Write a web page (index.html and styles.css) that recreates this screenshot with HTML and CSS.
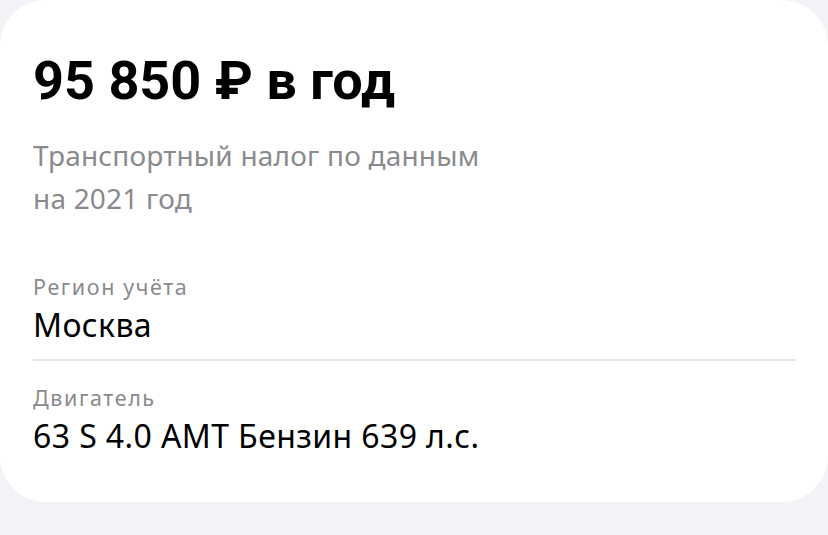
FILE: index.html
```html
<!DOCTYPE html>
<html lang="ru">
<head>
<meta charset="utf-8">
<link rel="stylesheet" href="styles.css">
</head>
<body>
<div class="card">
  <h1 class="price">95 850 ₽ в год</h1>
  <p class="desc">Транспортный налог по данным<br>на 2021 год</p>
  <div class="field first">
    <div class="label">Регион учёта</div>
    <div class="value">Москва</div>
  </div>
  <div class="divider"></div>
  <div class="field">
    <div class="label">Двигатель</div>
    <div class="value">63 S 4.0 AMT Бензин 639 л.с.</div>
  </div>
</div>
</body>
</html>
```
FILE: styles.css
```css
html, body {
  margin: 0;
  padding: 0;
  background: #f2f2f7;
  font-family: "Noto Sans", Roboto, sans-serif;
}
.card {
  background: #fff;
  width: 828px;
  height: 502px;
  box-sizing: border-box;
  border-radius: 46px;
  padding: 49px 32px 0 33px;
}
.price {
  margin: 0;
  font-family: Roboto, "Noto Sans", sans-serif;
  font-size: 54px;
  font-weight: 700;
  line-height: 64px;
  color: #000;
}
.desc {
  margin: 21px 0 0;
  font-size: 28px;
  line-height: 43px;
  letter-spacing: 0.2px;
  color: #8a8a8e;
}
.field.first {
  margin-top: 54px;
}
.label {
  font-size: 21.5px;
  line-height: 26px;
  letter-spacing: 1.6px;
  color: #8a8a8e;
}
.value {
  margin-top: 5px;
  font-size: 32px;
  line-height: 40px;
  letter-spacing: 0.4px;
  color: #000;
}
.divider {
  height: 2px;
  background: #e5e5e5;
  margin: 14px 0 0;
}
.divider + .field {
  margin-top: 24px;
}
```
